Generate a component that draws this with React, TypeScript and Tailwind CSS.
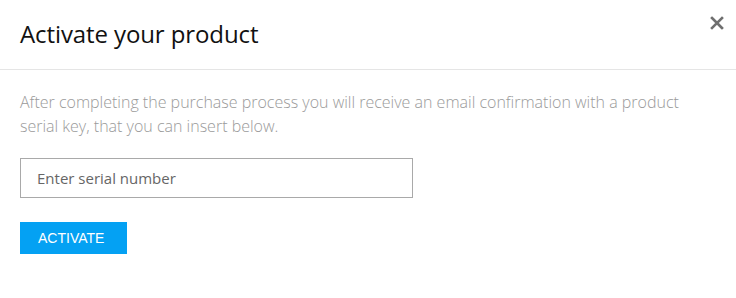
export default function App() {
  return (
    <div className="h-[298px] w-[736px] bg-white font-['Open_Sans',sans-serif]">
      {/* header */}
      <div className="flex h-[70px] items-start justify-between border-b border-[#e5e5e5] pl-5 pr-3">
        <h1 className="pt-[18px] text-[24px] leading-[32px] tracking-[-0.1px] text-[#111]">Activate your product</h1>
        <button className="mt-[15px] flex h-[15px] w-[15px] items-center justify-center text-[#6f6f6f]" aria-label="Close">
          <svg viewBox="0 0 14 14" className="h-[14px] w-[14px]" stroke="currentColor" strokeWidth="2.6" strokeLinecap="square">
            <path d="M2 2L12 12M12 2L2 12" />
          </svg>
        </button>
      </div>

      {/* body */}
      <div className="px-5 pt-[20px]">
        <p className="text-[16px] font-light leading-[24px] text-[#9a9a9a]">
          After completing the purchase process you will receive an email confirmation with a product
          <br />
          serial key, that you can insert below.
        </p>
        <input
          type="text"
          placeholder="Enter serial number"
          className="mt-[20px] block h-[40px] w-[393px] border border-[#a9a9a9] px-4 text-[15px] text-[#555] outline-none placeholder:text-[#666]"
        />
        <button className="mt-[24px] block h-[32px] w-[107px] bg-[#04a1f3] pl-[18px] text-left font-['Liberation_Sans',sans-serif] text-[14px] text-white">
          ACTIVATE
        </button>
      </div>
    </div>
  );
}
